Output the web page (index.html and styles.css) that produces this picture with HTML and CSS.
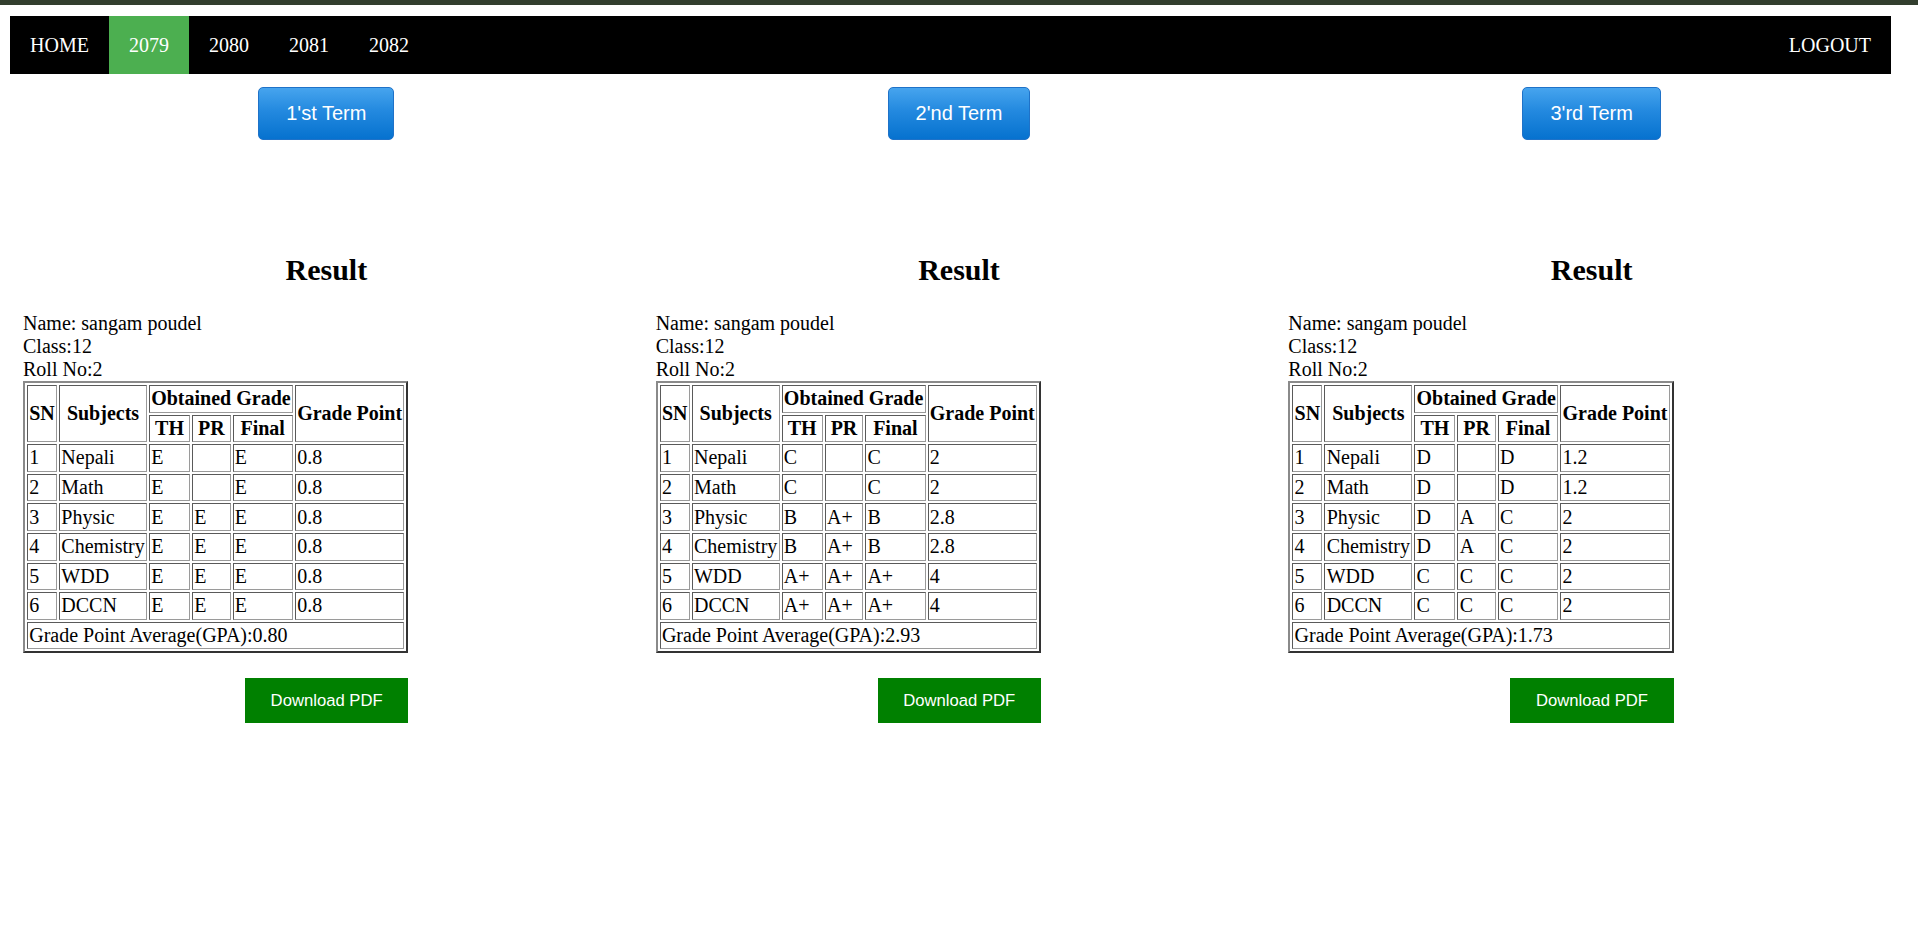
FILE: index.html
```html
<!DOCTYPE html>
<html lang="en">
<head>
<meta charset="utf-8">
<title>Result</title>
<link rel="stylesheet" href="styles.css">
</head>
<body>
<div class="topbar"></div>
<div class="page">
  <nav class="nav">
    <ul class="nav-list">
      <li><a class="nav-link" href="#">HOME</a></li>
      <li><a class="nav-link active" href="#">2079</a></li>
      <li><a class="nav-link" href="#">2080</a></li>
      <li><a class="nav-link" href="#">2081</a></li>
      <li><a class="nav-link" href="#">2082</a></li>
    </ul>
    <a class="nav-link" href="#">LOGOUT</a>
  </nav>

  <div class="columns">
    <section class="col">
      <div class="term-row"><button class="term-btn">1'st Term</button></div>
      <div class="result">
        <h2 class="result-title">Result</h2>
        <div class="info">
          <div>Name: sangam poudel</div>
          <div>Class:12</div>
          <div>Roll No:2</div>
        </div>
        <div class="sheet">
          <table class="grades">
            <tr><th rowspan="2">SN</th><th rowspan="2">Subjects</th><th colspan="3">Obtained Grade</th><th rowspan="2">Grade Point</th></tr>
            <tr><th>TH</th><th>PR</th><th>Final</th></tr>
            <tr><td>1</td><td>Nepali</td><td>E</td><td></td><td>E</td><td>0.8</td></tr>
            <tr><td>2</td><td>Math</td><td>E</td><td></td><td>E</td><td>0.8</td></tr>
            <tr><td>3</td><td>Physic</td><td>E</td><td>E</td><td>E</td><td>0.8</td></tr>
            <tr><td>4</td><td>Chemistry</td><td>E</td><td>E</td><td>E</td><td>0.8</td></tr>
            <tr><td>5</td><td>WDD</td><td>E</td><td>E</td><td>E</td><td>0.8</td></tr>
            <tr><td>6</td><td>DCCN</td><td>E</td><td>E</td><td>E</td><td>0.8</td></tr>
            <tr><td colspan="6">Grade Point Average(GPA):0.80</td></tr>
          </table>
          <div class="dl-row"><button class="dl-btn">Download PDF</button></div>
        </div>
      </div>
    </section>

    <section class="col">
      <div class="term-row"><button class="term-btn">2'nd Term</button></div>
      <div class="result">
        <h2 class="result-title">Result</h2>
        <div class="info">
          <div>Name: sangam poudel</div>
          <div>Class:12</div>
          <div>Roll No:2</div>
        </div>
        <div class="sheet">
          <table class="grades">
            <tr><th rowspan="2">SN</th><th rowspan="2">Subjects</th><th colspan="3">Obtained Grade</th><th rowspan="2">Grade Point</th></tr>
            <tr><th>TH</th><th>PR</th><th>Final</th></tr>
            <tr><td>1</td><td>Nepali</td><td>C</td><td></td><td>C</td><td>2</td></tr>
            <tr><td>2</td><td>Math</td><td>C</td><td></td><td>C</td><td>2</td></tr>
            <tr><td>3</td><td>Physic</td><td>B</td><td>A+</td><td>B</td><td>2.8</td></tr>
            <tr><td>4</td><td>Chemistry</td><td>B</td><td>A+</td><td>B</td><td>2.8</td></tr>
            <tr><td>5</td><td>WDD</td><td>A+</td><td>A+</td><td>A+</td><td>4</td></tr>
            <tr><td>6</td><td>DCCN</td><td>A+</td><td>A+</td><td>A+</td><td>4</td></tr>
            <tr><td colspan="6">Grade Point Average(GPA):2.93</td></tr>
          </table>
          <div class="dl-row"><button class="dl-btn">Download PDF</button></div>
        </div>
      </div>
    </section>

    <section class="col">
      <div class="term-row"><button class="term-btn">3'rd Term</button></div>
      <div class="result">
        <h2 class="result-title">Result</h2>
        <div class="info">
          <div>Name: sangam poudel</div>
          <div>Class:12</div>
          <div>Roll No:2</div>
        </div>
        <div class="sheet">
          <table class="grades">
            <tr><th rowspan="2">SN</th><th rowspan="2">Subjects</th><th colspan="3">Obtained Grade</th><th rowspan="2">Grade Point</th></tr>
            <tr><th>TH</th><th>PR</th><th>Final</th></tr>
            <tr><td>1</td><td>Nepali</td><td>D</td><td></td><td>D</td><td>1.2</td></tr>
            <tr><td>2</td><td>Math</td><td>D</td><td></td><td>D</td><td>1.2</td></tr>
            <tr><td>3</td><td>Physic</td><td>D</td><td>A</td><td>C</td><td>2</td></tr>
            <tr><td>4</td><td>Chemistry</td><td>D</td><td>A</td><td>C</td><td>2</td></tr>
            <tr><td>5</td><td>WDD</td><td>C</td><td>C</td><td>C</td><td>2</td></tr>
            <tr><td>6</td><td>DCCN</td><td>C</td><td>C</td><td>C</td><td>2</td></tr>
            <tr><td colspan="6">Grade Point Average(GPA):1.73</td></tr>
          </table>
          <div class="dl-row"><button class="dl-btn">Download PDF</button></div>
        </div>
      </div>
    </section>
  </div>
</div>
</body>
</html>
```

FILE: styles.css
```css
html, body {
  margin: 0;
  padding: 0;
  background: #ffffff;
}

body {
  font-family: "Liberation Serif", "Times New Roman", serif;
  font-size: 20px;
  line-height: 23px;
  color: #000000;
}

.topbar {
  height: 5px;
  background: #323e2e;
}

.page {
  padding: 11px 10px 10px;
}

.nav {
  display: flex;
  justify-content: space-between;
  align-items: stretch;
  background: #000000;
  margin-right: 17px;
}

.nav-list {
  display: flex;
  list-style: none;
  margin: 0;
  padding: 0;
}

.nav-link {
  display: block;
  padding: 17.5px 20px;
  color: #ffffff;
  text-decoration: none;
  font-size: 20px;
  line-height: 23px;
}

.nav-link.active {
  background: #4caf50;
}

.columns {
  display: grid;
  grid-template-columns: repeat(3, 1fr);
}

.col {
  padding: 0 13px;
  min-width: 0;
}

.term-row {
  text-align: center;
  padding-top: 13px;
}

.term-btn {
  font-family: "Liberation Sans", Arial, sans-serif;
  font-size: 20px;
  line-height: 23px;
  color: #ffffff;
  padding: 14px 27px;
  border: 1px solid #1f72c8;
  border-radius: 5px;
  background: linear-gradient(to bottom, #46a4ee 0%, #2389df 45%, #0672cf 100%);
  cursor: pointer;
}

.result {
  margin-top: 112px;
}

.result-title {
  margin: 0 0 25px;
  text-align: center;
  font-size: 30px;
  line-height: 35px;
  font-weight: bold;
}

.info {
  line-height: 23px;
}

.sheet {
  width: fit-content;
}

.grades {
  border-collapse: separate;
  border-spacing: 2.5px 2.7px;
  border-style: solid;
  border-width: 2px;
  border-color: #8a8a8a #333333 #333333 #8a8a8a;
}

.grades th,
.grades td {
  border-style: solid;
  border-width: 1px;
  border-color: #5a5a5a #9a9a9a #9a9a9a #5a5a5a;
  padding: 1.3px 1.25px;
  line-height: 23px;
  font-size: 20px;
}

.grades th {
  font-weight: bold;
  text-align: center;
}

.grades td {
  text-align: left;
}

.dl-row {
  display: flex;
  justify-content: flex-end;
  margin-top: 25px;
}

.dl-btn {
  font-family: "Liberation Sans", Arial, sans-serif;
  font-size: 16.67px;
  line-height: 19px;
  color: #ffffff;
  background: #008000;
  border: none;
  padding: 13px 25.75px;
  cursor: pointer;
}
```
